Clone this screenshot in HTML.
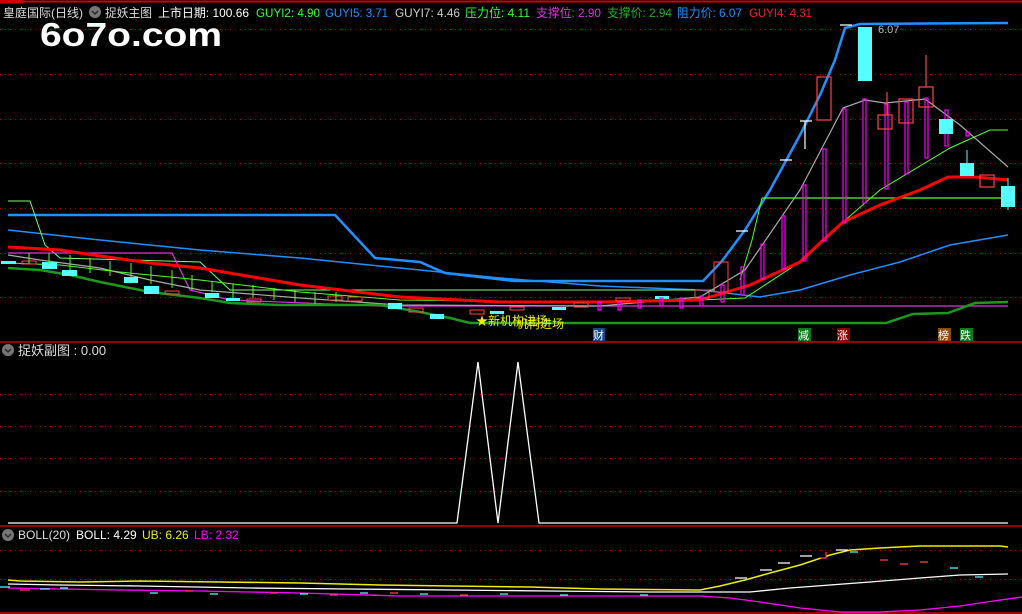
<!DOCTYPE html>
<html><head><meta charset="utf-8"><style>
html,body{margin:0;padding:0;background:#000;width:1022px;height:614px;overflow:hidden}
svg{display:block}
text{font-family:"Liberation Sans","Noto Sans CJK SC",sans-serif}
</style></head><body>
<svg width="1022" height="614" viewBox="0 0 1022 614" xmlns="http://www.w3.org/2000/svg">
<rect width="1022" height="614" fill="#000"/>
<line x1="0" y1="1.5" x2="1022" y2="1.5" stroke="#c00" stroke-width="2"/>
<rect x="0" y="0" width="23" height="3" fill="none" stroke="#c00"/>
<g stroke="#a00" stroke-dasharray="1,4" stroke-width="1">
<line x1="0" y1="29.5" x2="1022" y2="29.5"/><line x1="0" y1="74.5" x2="1022" y2="74.5"/><line x1="0" y1="119.5" x2="1022" y2="119.5"/><line x1="0" y1="163.5" x2="1022" y2="163.5"/><line x1="0" y1="208.5" x2="1022" y2="208.5"/><line x1="0" y1="253.5" x2="1022" y2="253.5"/><line x1="0" y1="297.5" x2="1022" y2="297.5"/>
<line x1="0" y1="394.5" x2="1022" y2="394.5"/><line x1="0" y1="426.5" x2="1022" y2="426.5"/><line x1="0" y1="458.5" x2="1022" y2="458.5"/><line x1="0" y1="491.5" x2="1022" y2="491.5"/>
<line x1="0" y1="550.5" x2="1022" y2="550.5"/><line x1="0" y1="579.5" x2="1022" y2="579.5"/>
</g>
<line x1="0" y1="342" x2="1022" y2="342" stroke="#c00" stroke-width="1.5"/>
<line x1="0" y1="526" x2="1022" y2="526" stroke="#c00" stroke-width="1.5"/>
<line x1="0" y1="613" x2="1022" y2="613" stroke="#c00" stroke-width="1.5"/>

<g font-size="12">
<text x="3" y="17" fill="#ddd" textLength="80" lengthAdjust="spacingAndGlyphs">皇庭国际(日线)</text>
<circle cx="95" cy="12" r="6" fill="#777"/><path d="M92,11 l3,3 l3,-3" stroke="#222" fill="none" stroke-width="1.3"/>
<text x="105" y="17" fill="#ddd" textLength="47" lengthAdjust="spacingAndGlyphs">捉妖主图</text>
<text x="158" y="17" fill="#fff" textLength="91" lengthAdjust="spacingAndGlyphs">上市日期: 100.66</text>
<text x="256" y="17" fill="#3f3" textLength="64" lengthAdjust="spacingAndGlyphs">GUYI2: 4.90</text>
<text x="325" y="17" fill="#1e90ff" textLength="63" lengthAdjust="spacingAndGlyphs">GUYI5: 3.71</text>
<text x="395" y="17" fill="#ccc" textLength="65" lengthAdjust="spacingAndGlyphs">GUYI7: 4.46</text>
<text x="465" y="17" fill="#3f3" textLength="65" lengthAdjust="spacingAndGlyphs">压力位: 4.11</text>
<text x="536" y="17" fill="#d3d" textLength="65" lengthAdjust="spacingAndGlyphs">支撑位: 2.90</text>
<text x="607" y="17" fill="#2a2" textLength="65" lengthAdjust="spacingAndGlyphs">支撑价: 2.94</text>
<text x="677" y="17" fill="#1e90ff" textLength="65" lengthAdjust="spacingAndGlyphs">阻力价: 6.07</text>
<text x="749" y="17" fill="#e22" textLength="63" lengthAdjust="spacingAndGlyphs">GUYI4: 4.31</text>
</g>
<text x="40" y="46" font-size="33" font-weight="bold" fill="#fff" textLength="182" lengthAdjust="spacingAndGlyphs">6o7o.com</text>

<polyline fill="none" stroke="#2090ff" stroke-width="2.5" points="8,215 335,215 375,258 420,262 445,273 515,281 703,281 722,261 745,230 770,190 800,135 820,95 835,60 845,28 860,24 1008,23"/>
<polyline fill="none" stroke="#2090ff" stroke-width="1.5" points="8,230 100,240 200,250 300,258 400,268 500,278 600,286 700,290 760,297 800,290 850,275 900,262 950,245 1008,235"/>
<polyline fill="none" stroke="#7f7" stroke-width="1" points="8,201 30,201 45,245 60,258 200,262 230,290 715,290"/>
<polyline fill="none" stroke="#d3d" stroke-width="1.2" points="8,253 172,253 190,290 230,300 380,306 1008,306"/>
<polyline fill="none" stroke="#aaa" stroke-width="1.2" points="8,255 40,260 100,268 150,280 200,290 300,298 400,305 600,306 700,297 745,270 800,190 843,108 865,100 885,103 925,99 960,125 1008,167"/>
<polyline fill="none" stroke="#5f2" stroke-width="1" points="8,263 60,265 120,272 200,280 300,292 400,300 600,302 700,300 745,298 800,262 843,222 880,190 950,148 990,130 1008,130"/>
<line x1="762" y1="198" x2="1008" y2="198" stroke="#5f2" stroke-width="1.2"/>
<polyline fill="none" stroke="#5f2" stroke-width="1" points="740,280 752,240 762,198"/>
<polyline fill="none" stroke="#f00" stroke-width="3" points="8,247 60,250 100,256 150,263 200,268 300,285 400,297 500,302 600,302 700,300 750,285 800,262 820,243 843,222 880,205 920,190 948,177 975,177 1008,180"/>
<polyline fill="none" stroke="#1a9a1a" stroke-width="2.5" points="8,268 40,270 70,275 100,282 150,292 200,298 230,303 280,305 380,305 420,312 450,318 470,323 886,323 913,314 948,313 975,303 1008,302"/>

<g fill="#5ff">
<rect x="1" y="261" width="15" height="3"/><rect x="42" y="262" width="15" height="7"/><rect x="62" y="270" width="15" height="6"/><rect x="124" y="277" width="14" height="6"/><rect x="144" y="286" width="15" height="8"/><rect x="205" y="293" width="14" height="5"/><rect x="226" y="298" width="14" height="3"/><rect x="388" y="303" width="14" height="6"/><rect x="430" y="314" width="14" height="5"/><rect x="490" y="311" width="14" height="3"/><rect x="552" y="307" width="14" height="3"/><rect x="655" y="296" width="14" height="3"/>
</g>
<g fill="none" stroke="#f44" stroke-width="1">
<rect x="22" y="261" width="14" height="3"/><rect x="165" y="291" width="14" height="3"/><rect x="247" y="299" width="14" height="3"/><rect x="328" y="296" width="14" height="4"/><rect x="348" y="297" width="14" height="4"/><rect x="409" y="308" width="14" height="4"/><rect x="470" y="310" width="14" height="4"/><rect x="510" y="307" width="14" height="3"/><rect x="574" y="303" width="14" height="4"/><rect x="616" y="298" width="14" height="3"/><rect x="714" y="262" width="14" height="30"/><rect x="695" y="290" width="14" height="8"/>
</g>
<g stroke="#5f2" stroke-width="1" fill="none">
<path d="M29,253v11M49,253v11M70,255v15M90,258v15M110,261v15M131,263v15M151,266v18M172,270v18M192,275v15M212,282v10M233,284v14M253,285v13M274,288v12M295,290v12M315,292v12M336,292v10"/>
</g>
<g stroke="#f0f" stroke-width="1.2" fill="none">
<rect x="598" y="302" width="3" height="8"/><rect x="618" y="302" width="3" height="8"/><rect x="638" y="300" width="3" height="8"/><rect x="660" y="298" width="3" height="8"/><rect x="680" y="298" width="3" height="10"/><rect x="700" y="296" width="3" height="10"/>
<rect x="721" y="285" width="3" height="17"/><rect x="741" y="267" width="3" height="28"/><rect x="761" y="244" width="3" height="35"/><rect x="782" y="216" width="3" height="53"/><rect x="803" y="185" width="3" height="76"/><rect x="823" y="149" width="3" height="92"/><rect x="843" y="109" width="3" height="114"/><rect x="863" y="99" width="3" height="104"/><rect x="885" y="104" width="3" height="85"/><rect x="905" y="102" width="3" height="72"/><rect x="925" y="98" width="3" height="60"/><rect x="945" y="110" width="3" height="36"/><rect x="966" y="132" width="3" height="4"/>
</g>
<g stroke="#fff" stroke-width="1.2">
<path d="M736,231h12M780,160h12M800,121h12M805,121v28M840,25h12"/>
</g>
<g fill="none" stroke="#f44" stroke-width="1.2">
<rect x="817" y="77" width="14" height="43"/><rect x="878" y="115" width="14" height="14"/><rect x="899" y="99" width="14" height="24"/><rect x="919" y="87" width="14" height="20"/><line x1="926" y1="55" x2="926" y2="87"/><rect x="980" y="175" width="14" height="12"/><line x1="887" y1="92" x2="887" y2="115"/>
</g>
<g fill="#5ff">
<rect x="858" y="27" width="14" height="54"/><rect x="939" y="119" width="14" height="15"/><rect x="960" y="163" width="14" height="13"/><rect x="1001" y="186" width="14" height="21"/>
</g>
<line x1="967" y1="150" x2="967" y2="163" stroke="#5ff"/>
<line x1="1008" y1="178" x2="1008" y2="210" stroke="#5ff"/>
<text x="878" y="33" font-size="11" fill="#bbb">6.07</text>

<text x="476" y="325" font-size="12" fill="#ee0">★新机构进场</text>
<text x="516" y="328" font-size="12" fill="#ee0">机构进场</text>
<rect x="593" y="328" width="12" height="13" fill="#134a80"/><text x="593" y="339" font-size="11" fill="#fff">财</text>
<rect x="798" y="328" width="13" height="13" fill="#0a7a1a"/><text x="798" y="339" font-size="11" fill="#fff">减</text>
<rect x="837" y="328" width="13" height="13" fill="#800"/><text x="837" y="339" font-size="11" fill="#fff">涨</text>
<rect x="938" y="328" width="13" height="13" fill="#8a4a10"/><text x="938" y="339" font-size="11" fill="#fff">榜</text>
<rect x="960" y="328" width="13" height="13" fill="#0a7a1a"/><text x="960" y="339" font-size="11" fill="#fff">跌</text>

<circle cx="8" cy="350" r="6" fill="#777"/><path d="M5,349 l3,3 l3,-3" stroke="#222" fill="none" stroke-width="1.3"/>
<text x="18" y="355" font-size="13" fill="#ddd">捉妖副图 : 0.00</text>
<polyline fill="none" stroke="#fff" stroke-width="1.3" points="8,523 457,523 478,362 498,523 518,362 539,523 1008,523"/>

<circle cx="8" cy="535" r="6" fill="#777"/><path d="M5,534 l3,3 l3,-3" stroke="#222" fill="none" stroke-width="1.3"/>
<text x="18" y="539" font-size="12" fill="#ddd">BOLL(20)</text>
<text x="76" y="539" font-size="12" fill="#fff">BOLL: 4.29</text>
<text x="142" y="539" font-size="12" fill="#ee0">UB: 6.26</text>
<text x="194" y="539" font-size="12" fill="#f0f">LB: 2.32</text>
<polyline fill="none" stroke="#ee0" stroke-width="1.5" points="8,580 20,581 80,582 140,581 220,582 300,583 380,585 450,586 530,587 600,589 700,590 720,586 745,580 770,573 800,565 830,555 850,550 880,548 920,546 1000,546 1008,547"/>
<polyline fill="none" stroke="#fff" stroke-width="1.3" points="8,584 60,585 140,586 250,588 350,589 450,590 550,591 650,592 750,592 790,588 830,585 870,582 920,578 960,575 1008,574"/>
<polyline fill="none" stroke="#f0f" stroke-width="1.3" points="8,588 60,589 120,590 200,591 300,593 400,596 500,596 600,596 700,596 730,598 760,602 800,608 840,612 880,612 920,610 960,606 1000,600 1022,597"/>
<g stroke="#5ff" stroke-width="1.2"><path d="M0,587h10M40,589h10M60,588h8M150,593h8M210,594h8M300,594h8M360,593h8M420,594h8M500,594h8M560,595h8M640,595h8M850,552h8M950,568h8M975,577h8"/></g>
<g stroke="#f44" stroke-width="1.2"><path d="M20,590h10M185,591h8M270,593h8M330,595h8M390,593h8M460,595h8M880,560h8M900,564h8M920,562h8M820,558h6v-6"/></g>
<g stroke="#fff" stroke-width="1.2"><path d="M735,578h12M760,570h12M778,563h12M800,556h12M836,550h12"/></g>
</svg>
</body></html>
